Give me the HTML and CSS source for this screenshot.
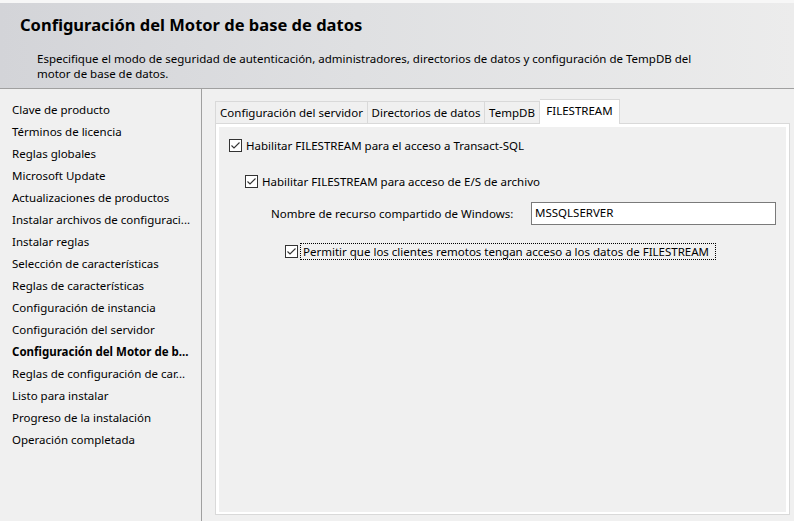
FILE: index.html
```html
<!DOCTYPE html>
<html lang="es">
<head>
<meta charset="utf-8">
<title>Configuración del Motor de base de datos</title>
<link rel="stylesheet" href="styles.css">
</head>
<body>
<div class="header">
  <h1 class="title">Configuración del Motor de base de datos</h1>
  <p class="desc">Especifique el modo de seguridad de autenticación, administradores, directorios de datos y configuración de TempDB del<br>motor de base de datos.</p>
</div>
<div class="main">
  <ul class="nav">
    <li>Clave de producto</li>
    <li>Términos de licencia</li>
    <li>Reglas globales</li>
    <li>Microsoft Update</li>
    <li>Actualizaciones de productos</li>
    <li>Instalar archivos de configuraci...</li>
    <li>Instalar reglas</li>
    <li>Selección de características</li>
    <li>Reglas de características</li>
    <li>Configuración de instancia</li>
    <li>Configuración del servidor</li>
    <li class="active">Configuración del Motor de b...</li>
    <li>Reglas de configuración de car...</li>
    <li>Listo para instalar</li>
    <li>Progreso de la instalación</li>
    <li>Operación completada</li>
  </ul>
  <div class="content">
    <div class="tabs">
      <div class="tab t1">Configuración del servidor</div>
      <div class="tab t2">Directorios de datos</div>
      <div class="tab t3">TempDB</div>
      <div class="tab t4 selected">FILESTREAM</div>
    </div>
    <div class="panel">
      <div class="page">
        <div class="row r1">
          <span class="cb"><svg width="11" height="11" viewBox="0 0 11 11"><polyline points="1.5,5.5 4,8 9.5,2.5" fill="none" stroke="#333" stroke-width="1.1"/></svg></span>
          <span>Habilitar FILESTREAM para el acceso a Transact-SQL</span>
        </div>
        <div class="row r2">
          <span class="cb"><svg width="11" height="11" viewBox="0 0 11 11"><polyline points="1.5,5.5 4,8 9.5,2.5" fill="none" stroke="#333" stroke-width="1.1"/></svg></span>
          <span>Habilitar FILESTREAM para acceso de E/S de archivo</span>
        </div>
        <div class="row r3">
          <span class="lbl">Nombre de recurso compartido de Windows:</span>
          <span class="input">MSSQLSERVER</span>
        </div>
        <div class="row r4">
          <span class="cb"><svg width="11" height="11" viewBox="0 0 11 11"><polyline points="1.5,5.5 4,8 9.5,2.5" fill="none" stroke="#333" stroke-width="1.1"/></svg></span>
          <span class="focus">Permitir que los clientes remotos tengan acceso a los datos de FILESTREAM</span>
        </div>
      </div>
    </div>
  </div>
</div>
</body>
</html>
```
FILE: styles.css
```css
html, body {
  margin: 0;
  padding: 0;
  height: 100%;
}
body {
  background: #f0f0f0;
  font-family: "Noto Sans", "Open Sans", sans-serif;
  font-size: 11.5px;
  color: #000;
  display: flex;
  flex-direction: column;
  overflow: hidden;
}
.header {
  height: 85px;
  border-top: 3px solid #f7f7f7;
  border-bottom: 1px solid #a0a0a0;
  background: linear-gradient(to right, #d3d4d8 0%, #dfe0e2 45%, #ececec 100%);
  box-sizing: content-box;
  flex: none;
}
.title {
  margin: 0;
  padding: 11px 0 0 20px;
  font-size: 16.5px;
  font-weight: bold;
  line-height: 22px;
}
.desc {
  margin: 0;
  padding: 15px 0 0 37px;
  line-height: 15px;
}
.main {
  flex: 1;
  display: flex;
  min-height: 0;
}
.nav {
  list-style: none;
  margin: 0;
  padding: 10px 0 0 12px;
  width: 189px;
  border-right: 1px solid #a0a0a0;
  flex: none;
}
.nav li {
  height: 22px;
  line-height: 22px;
  white-space: nowrap;
}
.nav li.active {
  font-weight: bold;
}
.content {
  flex: 1;
  display: flex;
  flex-direction: column;
  padding: 10px 4px 6px 13px;
}
.tabs {
  display: flex;
  align-items: flex-end;
  height: 24px;
  position: relative;
  z-index: 1;
}
.tab {
  height: 21px;
  line-height: 21px;
  border: 1px solid #d9d9d9;
  border-bottom: none;
  border-right: none;
  background: #f0f0f0;
  text-align: center;
  white-space: nowrap;
  box-sizing: content-box;
}
.t1 { width: 151px; }
.t2 { width: 116px; }
.t3 { width: 54px; border-right: 1px solid #d9d9d9; }
.tab.selected {
  width: 79px;
  height: 24px;
  line-height: 22px;
  background: #fff;
  border-right: 1px solid #d9d9d9;
  border-left: none;
  margin-bottom: -1px;
}
.panel {
  flex: 1;
  border: 1px solid #d9d9d9;
  background: #fff;
  padding: 3px 3px 2px 3px;
  display: flex;
}
.page {
  flex: 1;
  background: #f0f0f0;
  padding: 9px 0 0 10px;
}
.row {
  display: flex;
  align-items: center;
  height: 18px;
  white-space: nowrap;
}
.cb {
  width: 11px;
  height: 11px;
  border: 1px solid #333;
  background: #fff;
  display: inline-flex;
  margin-right: 4px;
  flex: none;
}
.cb svg { display: block; }
.r2 {
  margin-top: 18px;
  padding-left: 16px;
}
.r3 {
  margin-top: 12px;
  padding-left: 42px;
  height: 23px;
}
.lbl {
  width: 260px;
}
.input {
  width: 240px;
  height: 21px;
  line-height: 20px;
  border: 1px solid #7a7a7a;
  background: #fff;
  padding-left: 3px;
}
.r4 {
  margin-top: 17px;
  padding-left: 56px;
}
.r4 .cb { margin-right: 2px; }
.focus {
  border: 1px dotted #000;
  padding: 0 6px 0 2px;
  line-height: 15px;
}
```
